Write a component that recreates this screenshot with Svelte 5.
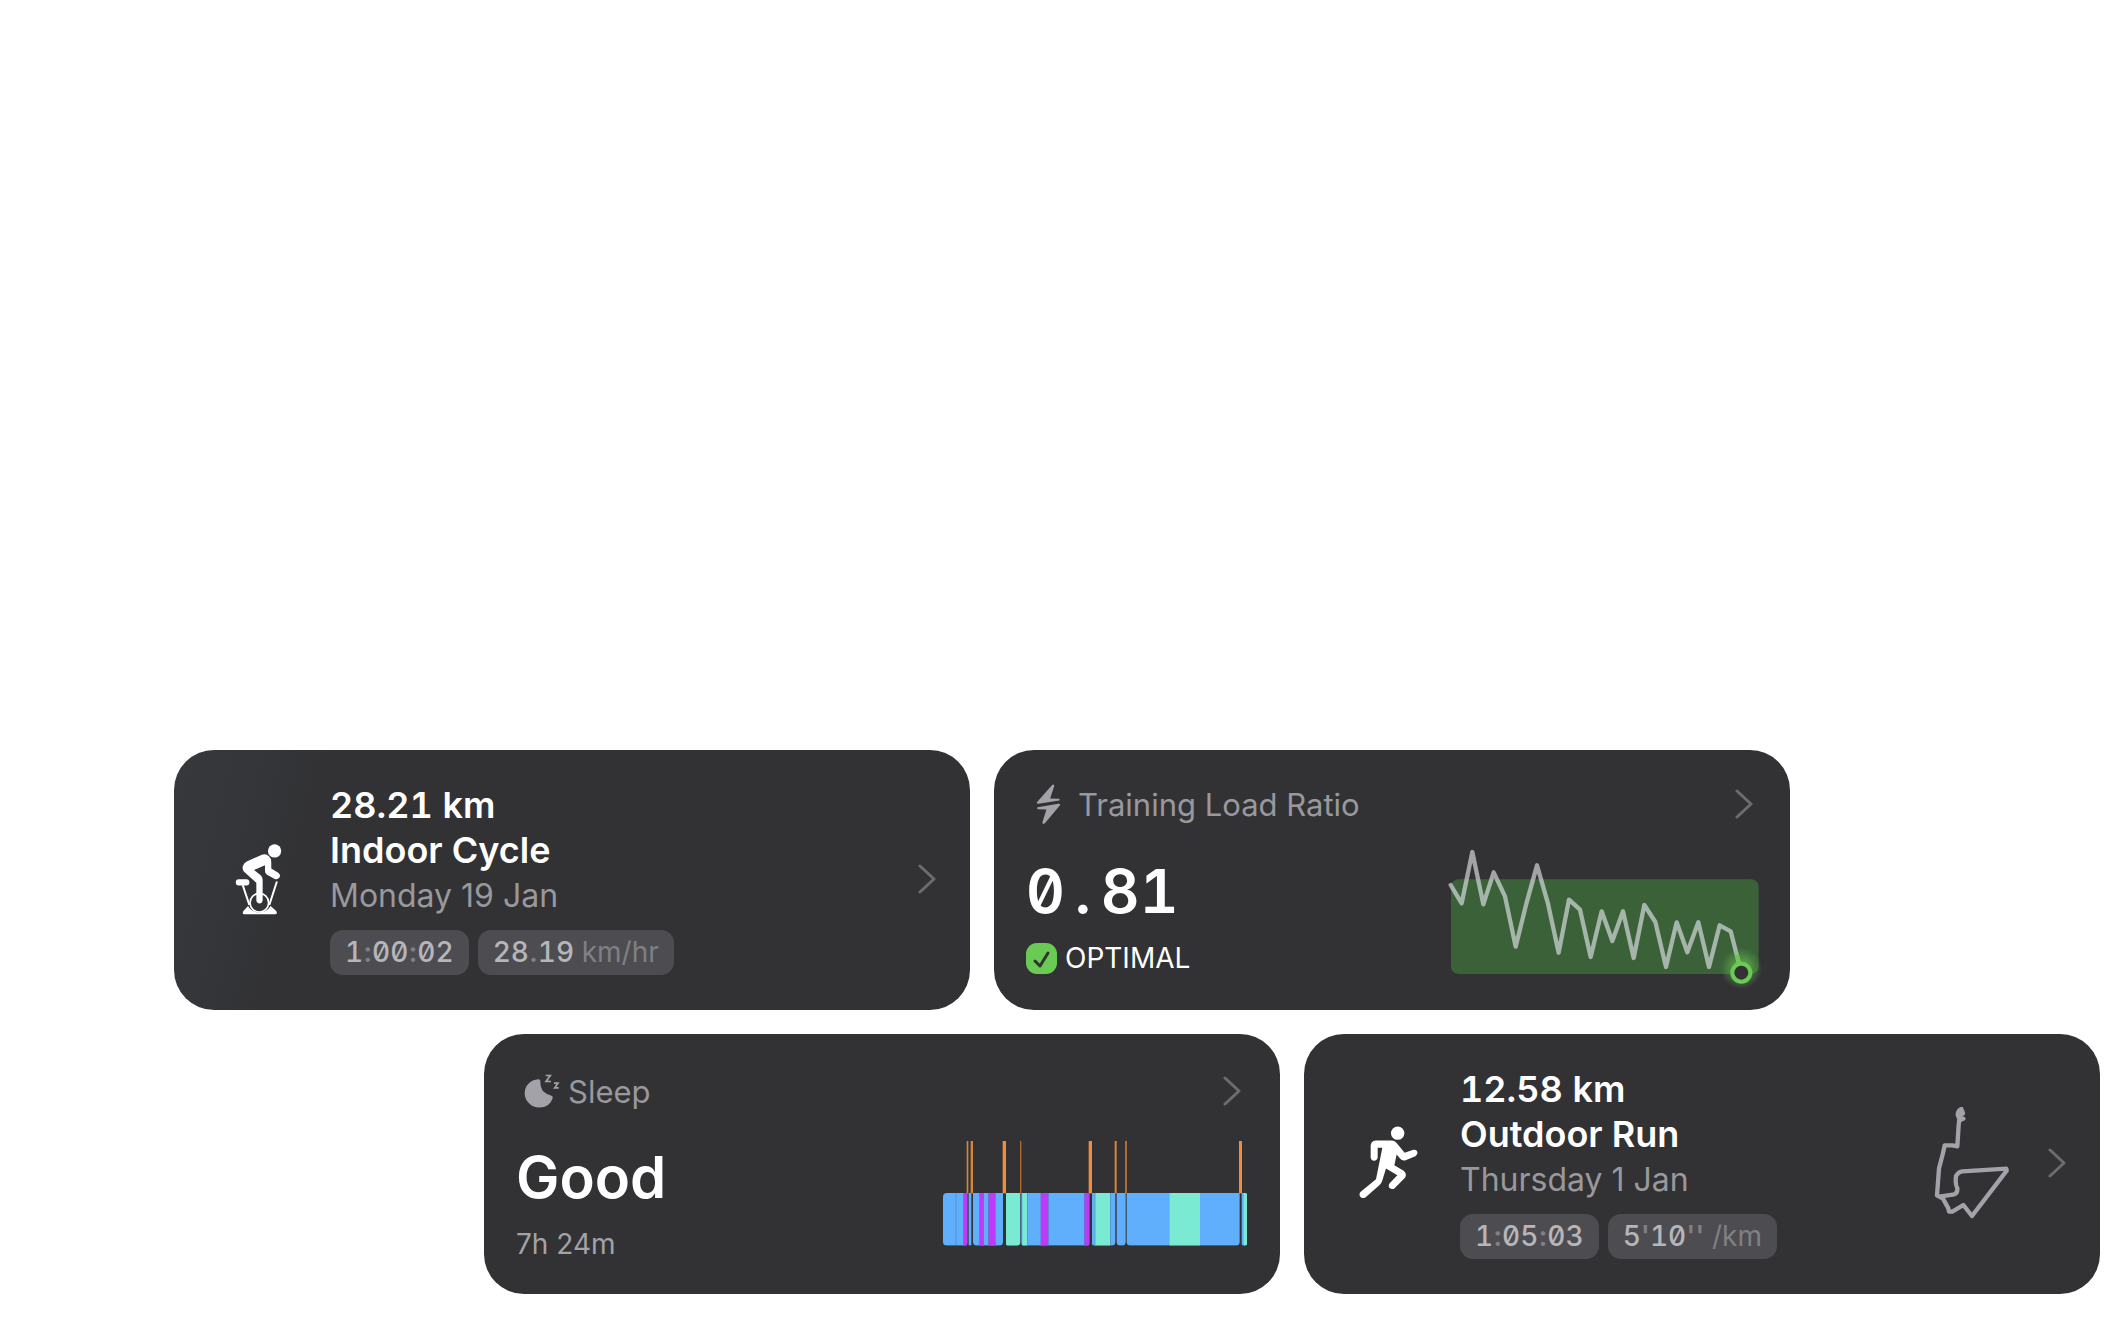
<script>
  const loadPoints =
    '92,434 125,489 157,335 190,492 221,396 255,468 287,619 319,490 351,375 384,490 416,637 447,478 480,508 512,650 545,513 577,602 609,513 641,653 673,494 706,545 738,680 770,546 802,636 835,546 867,680 899,555 932,573 964,697';

  const wakes = [
    { x: 140, w: 5, c: '#d4853f' },
    { x: 152, w: 7, c: '#d4853f' },
    { x: 248, w: 10, c: '#ee8c41' },
    { x: 300, w: 4, c: '#b06d31' },
    { x: 506, w: 10, c: '#ee8c41' },
    { x: 584, w: 6, c: '#d4853f' },
    { x: 615, w: 6, c: '#b06d31' },
    { x: 957, w: 9, c: '#ee8c41' }
  ];

  const blocks = [
    { x: 69, w: 73, l: 12, r: 6 },
    { x: 146, w: 8, l: 3, r: 3 },
    { x: 159, w: 90, l: 12, r: 12 },
    { x: 258, w: 43, l: 6, r: 12 },
    { x: 304, w: 204, l: 6, r: 6 },
    { x: 516, w: 70, l: 6, r: 12 },
    { x: 590, w: 27, l: 12, r: 12 },
    { x: 620, w: 339, l: 12, r: 12 },
    { x: 965, w: 16, l: 6, r: 6 }
  ];

  const stages = [
    { x: 130, w: 12, c: 'rem' },
    { x: 178, w: 14, c: 'rem' },
    { x: 204, w: 22, c: 'rem' },
    { x: 258, w: 43, c: 'deep' },
    { x: 307, w: 15, c: 'deep' },
    { x: 362, w: 23, c: 'rem' },
    { x: 492, w: 16, c: 'rem' },
    { x: 524, w: 47, c: 'deep' },
    { x: 749, w: 91, c: 'deep' },
    { x: 971, w: 10, c: 'deep' }
  ];

  const seams = [107, 130, 178, 189, 204, 226, 322, 362, 385, 492, 524, 571];

  function blockPath({ x, w, l, r }) {
    const a = Math.min(l, w / 2);
    const b = Math.min(r, w / 2);
    const tl = x === 69 ? 12 : 0;
    const tr = x === 965 ? 5 : 0;
    return `M${x + tl} 519H${x + w - tr}q${tr} 0 ${tr} ${tr}V${677 - b}q0 ${b} ${-b} ${b}H${x + a}q${-a} 0 ${-a} ${-a}V${519 + tl}q0 ${-tl} ${tl} ${-tl}z`;
  }
</script>

{#snippet chevron()}
  <svg class="chevron" viewBox="0 0 18 30" aria-hidden="true">
    <path d="M2 2 L16 15 L2 28" />
  </svg>
{/snippet}

<main>
  <div class="row first">
    <a class="card workout tinted" href="#indoor-cycle">
      <span class="sport">
        <svg class="cyclist" viewBox="222 310 141 214" aria-hidden="true">
          <circle cx="341" cy="331" r="20" />
          <rect x="224" y="416" width="41" height="19" rx="9" />
          <path
            d="M301 343 Q315 338 324 347 Q331 353 331 365 V384 L352 397 Q359 402 357 409 Q353 418 343 416 L318 403 Q312 399 312 391 V374 L279 388 L300 405 Q305 410 305 418 V480 Q304 488 296 489 Q287 488 286 480 V427 L249 394 Q243 387 245 377 Q248 368 257 363 Z"
          />
          <path d="M245 434 L265 494 M348 423 L325 494" class="frame" />
          <circle cx="295" cy="487" r="28" class="wheel" />
          <path
            d="M261 497 Q272 516 295 516 Q318 516 329 497 L346 512 Q351 522 342 522 H250 Q242 521 247 512 Z"
          />
        </svg>
      </span>
      <span class="details">
        <strong>28.21 <span class="word">km</span></strong>
        <strong class="word">Indoor Cycle</strong>
        <span class="date">Monday 19 Jan</span>
        <span class="pills">
          <span class="pill">1<i>:</i>00<i>:</i>02</span>
          <span class="pill">28<i>.</i>19 <em>km/hr</em></span>
        </span>
      </span>
      {@render chevron()}
    </a>

    <a class="card metric" href="#training-load">
      <span class="head">
        <span class="glyph">
          <svg class="bolt" viewBox="168 134 98 122" aria-hidden="true">
            <path
              d="M216 137 Q223 133 222 141 L210 177 L236 178 Q241 180 237 183 L175 193 Q167 193 172 187 Z M173 203 L234 193 Q243 192 238 199 L195 250 Q187 257 187 248 L199 210 L174 209 Q168 206 173 203 Z"
            />
          </svg>
        </span>
        <span class="label">Training Load Ratio</span>
        {@render chevron()}
      </span>
      <span class="body">
        <span class="reading">
          <strong class="value tabular">0<span class="point">.</span>81</strong>
          <span class="status">
            <svg class="badge" viewBox="0 0 31 31" aria-hidden="true">
              <rect width="31" height="31" rx="11" />
              <path d="M9 18 L14 23 L22 10" />
            </svg>
            OPTIMAL
          </span>
        </span>
        <svg class="load" viewBox="93 341 924 360" role="img" aria-label="Training load trend">
          <defs>
            <radialGradient id="glow">
              <stop offset="0.4" stop-color="#6acb54" stop-opacity="0.5" />
              <stop offset="1" stop-color="#6acb54" stop-opacity="0" />
            </radialGradient>
          </defs>
          <rect x="93" y="417" width="923" height="284" rx="22" class="zone" />
          <polyline points={loadPoints} class="trend" />
          <circle cx="964" cy="684" r="62" fill="url(#glow)" />
          <path d="M951 644 L964 697" class="tail" />
          <circle cx="964" cy="697" r="27" class="now" />
        </svg>
      </span>
    </a>
  </div>

  <div class="row second">
    <a class="card metric night" href="#sleep">
      <span class="head">
        <span class="glyph">
          <svg class="moon" viewBox="160 161 108 101" aria-hidden="true">
            <path
              d="M203 176 Q210 176 209 184 Q209 203 219 214 Q228 222 241 225 Q248 227 246 233 Q237 261 206 261 Q188 261 175 248 Q162 235 162 218 Q162 202 173 190 Q185 177 203 176 Z"
            />
            <path d="M225 165 H239 L226 183 H241" class="zed" />
            <path d="M250 188 H262 L252 202 H264" class="zed" />
          </svg>
        </span>
        <span class="label">Sleep</span>
        {@render chevron()}
      </span>
      <span class="body">
        <span class="reading">
          <strong class="value">Good</strong>
          <span class="status muted">7h 24m</span>
        </span>
        <svg class="stages" viewBox="69 363 912 315" role="img" aria-label="Sleep stages">
          <defs>
            <clipPath id="asleep">
              {#each blocks as b}<path d={blockPath(b)} />{/each}
            </clipPath>
          </defs>
          {#each wakes as w}
            <rect x={w.x} y="363" width={w.w} height="157" fill={w.c} />
          {/each}
          <g clip-path="url(#asleep)">
            <rect x="69" y="519" width="912" height="158" class="core" />
            {#each stages as s}
              <rect x={s.x} y="519" width={s.w} height="158" class={s.c} />
            {/each}
            {#each seams as x}
              <rect {x} y="519" width="2" height="158" class="seam" />
            {/each}
          </g>
        </svg>
      </span>
    </a>

    <a class="card workout" href="#outdoor-run">
      <span class="sport">
        <svg class="runner" viewBox="209 314 177 224" aria-hidden="true">
          <circle cx="325" cy="335" r="20" />
          <path
            d="M259 357 H306 Q318 358 325 368 L346 394 L372 385 Q381 383 384 391 Q386 399 378 404 L349 416 Q339 419 332 411 L322 399 L315 431 L343 448 Q354 457 347 469 L315 501 Q307 505 300 499 Q296 492 301 485 L324 461 L290 441 L279 477 Q277 485 270 491 L229 527 Q219 533 212 525 Q208 516 215 510 L260 473 L279 379 H265 V408 Q264 417 254 418 Q245 417 244 408 V372 Q245 359 259 357 Z"
          />
        </svg>
      </span>
      <span class="details">
        <strong>12.58 <span class="word">km</span></strong>
        <strong class="word">Outdoor Run</strong>
        <span class="date">Thursday 1 Jan</span>
        <span class="pills">
          <span class="pill">1<i>:</i>05<i>:</i>03</span>
          <span class="pill">5<i>'</i>10<i>''</i> <em>/km</em></span>
        </span>
      </span>
      <svg class="route" viewBox="165 258 225 336" role="img" aria-label="Route">
        <path
          d="M253 293 L243 298 L236 281 Q237 269 247 264 L252 277 L242 285 L239 312 L235 376 L220 373 H197 Q193 393 189 408 L180 442 L174 523 L181 527 L226 520 Q236 516 235 502 Q228 490 231 465 Q238 452 250 451 L382 443 L383 449 L279 585 L253 552 L220 572 H210 L208 562 L192 533 L181 527"
        />
      </svg>
      {@render chevron()}
    </a>
  </div>
</main>

<style>
  :global(body) {
    margin: 0;
    background: #fff;
  }

  main {
    box-sizing: border-box;
    min-height: 100vh;
    display: flex;
    flex-direction: column;
    justify-content: flex-end;
    gap: 24px;
    padding-bottom: 34px;
    font-family: Inter, 'Liberation Sans', sans-serif;
  }

  .row {
    display: grid;
    grid-template-columns: repeat(2, minmax(0, 1fr));
    gap: 24px;
  }

  .first {
    padding: 0 330px 0 174px;
  }

  .second {
    padding: 0 20px 0 484px;
  }

  .card {
    box-sizing: border-box;
    min-height: 260px;
    display: flex;
    border-radius: 40px;
    background: #323234;
    color: #fff;
    text-decoration: none;
    white-space: nowrap;
  }

  .workout {
    align-items: center;
    padding: 0 34px 2px 12px;
  }

  .tinted {
    background: linear-gradient(105deg, #36383c 0, #34363a 80px, #323234 150px);
  }

  .sport {
    flex: 0 0 144px;
    display: flex;
    justify-content: center;
    fill: #fff;
  }

  .cyclist {
    width: 47px;
    height: 71px;
  }

  .frame {
    fill: none;
    stroke: #fff;
    stroke-width: 6;
  }

  .wheel {
    fill: none;
    stroke: #fff;
    stroke-width: 5;
  }

  .runner {
    width: 59px;
    height: 75px;
  }

  .details {
    flex: 1;
    display: flex;
    flex-direction: column;
    font-size: 36px;
    line-height: 45px;
  }

  .details strong {
    font-weight: 600;
    font-feature-settings: 'tnum';
  }

  .details .word {
    font-weight: 600;
    font-feature-settings: normal;
  }

  .date {
    font-size: 32px;
    line-height: 46px;
    color: #98989d;
  }

  .pills {
    display: flex;
    gap: 9px;
    margin-top: 11px;
  }

  .pill {
    padding: 0 15px;
    border-radius: 13px;
    background: #4d4c51;
    color: #b5b5ba;
    font-size: 28px;
    font-weight: 500;
    font-feature-settings: 'tnum', 'zero';
  }

  .pill i,
  .pill em {
    font-style: normal;
    font-weight: 400;
    font-feature-settings: normal;
    color: #7f8084;
  }

  .pill i {
    font-weight: 600;
  }

  .chevron {
    flex: none;
    width: 18px;
    height: 30px;
    fill: none;
    stroke: #6c6c70;
    stroke-width: 3;
    stroke-linecap: round;
    stroke-linejoin: round;
  }

  .route {
    flex: none;
    width: 75px;
    height: 112px;
    margin-right: 39px;
    fill: none;
    stroke: #a2a2a8;
    stroke-width: 13;
    stroke-linecap: round;
    stroke-linejoin: round;
  }

  .metric {
    flex-direction: column;
    gap: 26px;
    padding: 30px 31px 0 32px;
  }

  .night {
    padding: 33px 33px 0 32px;
  }

  .head {
    display: flex;
    align-items: center;
    height: 48px;
    padding-right: 6px;
  }

  .glyph {
    flex: 0 0 52px;
    display: flex;
    justify-content: center;
    fill: #a2a2a8;
  }

  .bolt {
    width: 33px;
    height: 41px;
  }

  .moon {
    width: 36px;
    height: 34px;
  }

  .zed {
    fill: none;
    stroke: #a2a2a8;
    stroke-width: 5;
  }

  .label {
    flex: 1;
    font-size: 31px;
    color: #98989d;
  }

  .body {
    display: flex;
    justify-content: space-between;
    align-items: flex-end;
  }

  .night .body {
    align-items: flex-start;
  }

  .reading {
    display: flex;
    flex-direction: column;
    gap: 15px;
  }

  .value {
    font-size: 58px;
    line-height: 72px;
    font-weight: 600;
  }

  .tabular {
    font-size: 60px;
    font-feature-settings: 'tnum', 'zero';
  }

  .point {
    display: inline-block;
    width: 36px;
    text-align: center;
  }

  .status {
    display: flex;
    align-items: center;
    gap: 8px;
    font-size: 28px;
    line-height: 32px;
  }

  .muted {
    color: #a2a2a8;
  }

  .badge {
    width: 31px;
    height: 31px;
  }

  .badge rect {
    fill: #6acb54;
  }

  .badge path {
    fill: none;
    stroke: #323234;
    stroke-width: 3;
    stroke-linecap: round;
    stroke-linejoin: round;
  }

  .load {
    width: 308px;
    height: 120px;
    overflow: visible;
  }

  .zone {
    fill: #3a6138;
  }

  .trend {
    fill: none;
    stroke: #eeedf5;
    stroke-opacity: 0.6;
    stroke-width: 13;
    stroke-linecap: round;
    stroke-linejoin: round;
  }

  .tail {
    fill: none;
    stroke: #6acb54;
    stroke-width: 12;
  }

  .now {
    fill: #323234;
    stroke: #6acb54;
    stroke-width: 12;
  }

  .stages {
    width: 304px;
    height: 105px;
  }

  .core {
    fill: #60affc;
  }

  .rem {
    fill: #bf3af8;
  }

  .deep {
    fill: #7aebd2;
  }

  .seam {
    fill: #4c86c4;
  }
</style>
